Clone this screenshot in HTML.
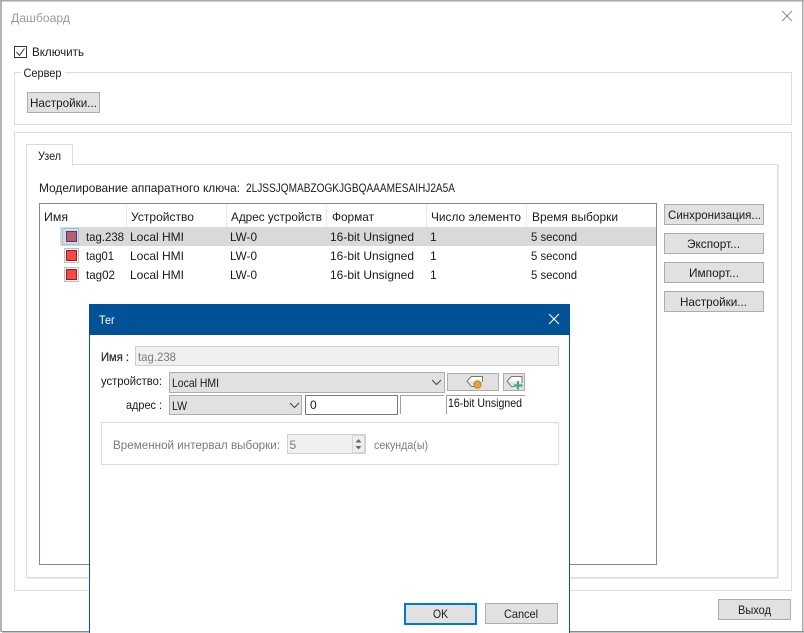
<!DOCTYPE html>
<html lang="ru">
<head>
<meta charset="utf-8">
<title>Дашбоард</title>
<style>
html,body{margin:0;padding:0;width:804px;height:633px;overflow:hidden;background:#fff}
svg{display:block}
text{font-family:"Liberation Sans","DejaVu Sans",sans-serif;font-size:12px;fill:#1a1a1a;white-space:pre}
.g{fill:#7a7a7a}
.btn{fill:#e1e1e1;stroke:#adadad;stroke-width:1}
.ln{fill:none;stroke:#dcdcdc;stroke-width:1}
</style>
</head>
<body>
<svg width="804" height="633" viewBox="0 0 804 633" xmlns="http://www.w3.org/2000/svg">
<rect width="804" height="633" fill="#fff"/>
<!-- window frame -->
<rect x="1" y="0.5" width="801.5" height="631" fill="#fff" stroke="#8f8f8f" stroke-width="1"/>
<rect x="0" y="0" width="2" height="632" fill="#b4b4b4"/>
<rect x="0" y="0" width="804" height="1.5" fill="#a8a8a8"/>
<rect x="802" y="0" width="1.5" height="632" fill="#a8a8a8"/>
<rect x="2" y="631" width="802" height="1.5" fill="#8a8a8a"/>
<text x="11" y="22" textLength="59" lengthAdjust="spacingAndGlyphs" style="fill:#9a9a9a">Дашбоард</text>
<path d="M782 11L792 21M792 11L782 21" stroke="#8a8a8a" stroke-width="1" fill="none"/>

<!-- enable -->
<rect x="14.5" y="46.5" width="12" height="11" fill="#fff" stroke="#333"/>
<path d="M16.5 52L19.5 55.5L24.5 48.5" stroke="#333" stroke-width="1" fill="none"/>
<text x="32" y="56" textLength="52" lengthAdjust="spacingAndGlyphs">Включить</text>

<!-- server group -->
<rect x="14.5" y="72.5" width="777" height="52" class="ln"/>
<rect x="21" y="68" width="44" height="10" fill="#fff"/>
<text x="23.500" y="77" textLength="38" lengthAdjust="spacingAndGlyphs">Сервер</text>
<rect x="27.500" y="92.500" width="72" height="20" class="btn"/>
<text x="30" y="107" textLength="67" lengthAdjust="spacingAndGlyphs">Настройки...</text>

<!-- outer group -->
<rect x="14.500" y="132.500" width="777" height="458" class="ln"/>
<!-- tab panel -->
<rect x="26.500" y="164.500" width="751" height="413" class="ln"/>
<path d="M27 578.500H778.500V165" stroke="#ececec" stroke-width="1" fill="none"/>
<rect x="26.500" y="144.500" width="46" height="21" fill="#fff" stroke="#dcdcdc"/>
<rect x="27" y="160" width="45" height="6" fill="#fff"/>
<text x="38" y="160" textLength="23" lengthAdjust="spacingAndGlyphs">Узел</text>
<text x="39" y="192" textLength="201" lengthAdjust="spacingAndGlyphs">Моделирование аппаратного ключа:</text>
<text x="246" y="192" textLength="209" lengthAdjust="spacingAndGlyphs">2LJSSJQMABZOGKJGBQAAAMESAIHJ2A5A</text>

<!-- list -->
<rect x="39.500" y="203.500" width="617" height="361" fill="#fff" stroke="#7f8a96"/>
<path d="M126.500 204V227M226.500 204V227M326.500 204V227M426.500 204V227M526.500 204V227" stroke="#e8e8e8"/>
<text x="44" y="221" textLength="24" lengthAdjust="spacingAndGlyphs">Имя</text>
<text x="131" y="221" textLength="63" lengthAdjust="spacingAndGlyphs">Устройство</text>
<text x="231" y="221" textLength="91" lengthAdjust="spacingAndGlyphs">Адрес устройств</text>
<text x="332" y="221" textLength="42" lengthAdjust="spacingAndGlyphs">Формат</text>
<text x="431" y="221" textLength="90" lengthAdjust="spacingAndGlyphs">Число элементо</text>
<text x="532" y="221" textLength="86" lengthAdjust="spacingAndGlyphs">Время выборки</text>

<rect x="60" y="227" width="596" height="19" fill="#d9d9d9"/>
<!-- icons -->
<rect x="62.500" y="228.500" width="16" height="16" fill="#cfdbe6" stroke="#9cc3e6"/>
<rect x="66.500" y="231.500" width="10" height="10" fill="#b0607c" stroke="#6e3048"/>
<rect x="64.500" y="248.500" width="14" height="14" fill="#fff" stroke="#bdbdbd"/>
<rect x="66.500" y="250.500" width="10" height="10" fill="#ff4545" stroke="#8a2020"/>
<rect x="64.500" y="267.500" width="14" height="14" fill="#fff" stroke="#bdbdbd"/>
<rect x="66.500" y="269.500" width="10" height="10" fill="#ff4545" stroke="#8a2020"/>

<text x="86" y="241" textLength="38" lengthAdjust="spacingAndGlyphs">tag.238</text>
<text x="130" y="241" textLength="54" lengthAdjust="spacingAndGlyphs">Local HMI</text>
<text x="230" y="241" textLength="27" lengthAdjust="spacingAndGlyphs">LW-0</text>
<text x="330" y="241" textLength="84" lengthAdjust="spacingAndGlyphs">16-bit Unsigned</text>
<text x="430" y="241">1</text>
<text x="531" y="241" textLength="46" lengthAdjust="spacingAndGlyphs">5 second</text>

<text x="86" y="260" textLength="28" lengthAdjust="spacingAndGlyphs">tag01</text>
<text x="130" y="260" textLength="54" lengthAdjust="spacingAndGlyphs">Local HMI</text>
<text x="230" y="260" textLength="27" lengthAdjust="spacingAndGlyphs">LW-0</text>
<text x="330" y="260" textLength="84" lengthAdjust="spacingAndGlyphs">16-bit Unsigned</text>
<text x="430" y="260">1</text>
<text x="531" y="260" textLength="46" lengthAdjust="spacingAndGlyphs">5 second</text>

<text x="86" y="279" textLength="29" lengthAdjust="spacingAndGlyphs">tag02</text>
<text x="130" y="279" textLength="54" lengthAdjust="spacingAndGlyphs">Local HMI</text>
<text x="230" y="279" textLength="27" lengthAdjust="spacingAndGlyphs">LW-0</text>
<text x="330" y="279" textLength="84" lengthAdjust="spacingAndGlyphs">16-bit Unsigned</text>
<text x="430" y="279">1</text>
<text x="531" y="279" textLength="46" lengthAdjust="spacingAndGlyphs">5 second</text>

<!-- right buttons -->
<rect x="664.500" y="204.500" width="99" height="20" class="btn"/>
<text x="668" y="219" textLength="93" lengthAdjust="spacingAndGlyphs">Синхронизация...</text>
<rect x="664.500" y="233.500" width="99" height="20" class="btn"/>
<text x="687" y="248" textLength="53" lengthAdjust="spacingAndGlyphs">Экспорт...</text>
<rect x="664.500" y="262.500" width="99" height="20" class="btn"/>
<text x="689" y="277" textLength="50" lengthAdjust="spacingAndGlyphs">Импорт...</text>
<rect x="664.500" y="291.500" width="99" height="20" class="btn"/>
<text x="680" y="306" textLength="67" lengthAdjust="spacingAndGlyphs">Настройки...</text>

<rect x="718.500" y="599.500" width="72" height="20" class="btn"/>
<text x="738" y="614" textLength="33" lengthAdjust="spacingAndGlyphs">Выход</text>

<!-- dialog -->
<rect x="89.500" y="304.500" width="480" height="340" fill="#fff" stroke="#0b5394"/>
<rect x="89" y="304" width="481" height="31" fill="#005195"/>
<text x="99" y="324" textLength="16" lengthAdjust="spacingAndGlyphs" style="fill:#fff">Тег</text>
<path d="M549 314L559 324M559 314L549 324" stroke="#fff" stroke-width="1.100" fill="none"/>

<text x="101" y="361" textLength="28" lengthAdjust="spacingAndGlyphs" style="stroke:#333;stroke-width:.25;fill:#333">Имя :</text>
<rect x="135.500" y="346.500" width="423" height="19" fill="#f0f0f0" stroke="#cfcfcf"/>
<text x="138" y="361" textLength="38" lengthAdjust="spacingAndGlyphs" class="g">tag.238</text>

<text x="101" y="385" textLength="61" lengthAdjust="spacingAndGlyphs">устройство:</text>
<rect x="169.500" y="372.500" width="275" height="20" class="btn"/>
<text x="172" y="387" textLength="47" lengthAdjust="spacingAndGlyphs">Local HMI</text>
<path d="M432 380L436.500 384.500L441 380" stroke="#444" fill="none"/>

<!-- tag buttons -->
<rect x="447.500" y="373.500" width="51" height="17" class="btn"/>
<path d="M467 381L471.500 376.500H482.500V382M475 386.500H471.500L467 381" stroke="#777" stroke-width="1" fill="#fff"/>
<circle cx="477.500" cy="384.500" r="3.700" fill="#e8a13c" stroke="#c9822c"/>
<rect x="503.500" y="373.500" width="21" height="17" class="btn"/>
<path d="M507 381L511.500 376.500H522V383M514 386.500H511.500L507 381" stroke="#777" stroke-width="1" fill="#fff"/>
<path d="M518 381V389.500M514 385.500H522.500" stroke="#3fae72" stroke-width="2.200" fill="none"/>

<text x="126" y="409" textLength="36" lengthAdjust="spacingAndGlyphs">адрес :</text>
<rect x="169.500" y="395.500" width="132" height="19" class="btn"/>
<text x="172" y="410" textLength="15" lengthAdjust="spacingAndGlyphs">LW</text>
<path d="M290 403L294.500 407.500L299 403" stroke="#444" fill="none"/>
<rect x="305.500" y="395.500" width="92" height="19" fill="#fff" stroke="#7a7a7a"/>
<text x="310" y="409">0</text>
<path d="M400.500 414V395.500H444M446.500 414V395.500H525" stroke="#a0a0a0" fill="none"/>
<text x="448" y="407" textLength="74" lengthAdjust="spacingAndGlyphs" style="fill:#111">16-bit Unsigned</text>

<rect x="101.500" y="422.500" width="457" height="42" fill="#fff" stroke="#dcdcdc"/>
<text x="113" y="449" textLength="167" lengthAdjust="spacingAndGlyphs" class="g">Временной интервал выборки:</text>
<rect x="287.500" y="434.500" width="78" height="19" fill="#f0f0f0" stroke="#cfcfcf"/>
<text x="289.500" y="449" class="g">5</text>
<rect x="352.500" y="435.500" width="12" height="17" fill="#eee" stroke="#d8d8d8"/>
<path d="M355.500 442.500H361.500L358.500 439ZM355.500 446H361.500L358.500 449.500Z" fill="#666"/>
<text x="374" y="449" textLength="54" lengthAdjust="spacingAndGlyphs" class="g">секунда(ы)</text>

<rect x="405" y="604" width="71" height="20" fill="#e1e1e1" stroke="#0078d7" stroke-width="2"/>
<text x="433" y="618" textLength="15" lengthAdjust="spacingAndGlyphs">OK</text>
<rect x="485.500" y="603.500" width="72" height="20" class="btn"/>
<text x="504" y="618" textLength="34" lengthAdjust="spacingAndGlyphs">Cancel</text>
</svg>
</body>
</html>
